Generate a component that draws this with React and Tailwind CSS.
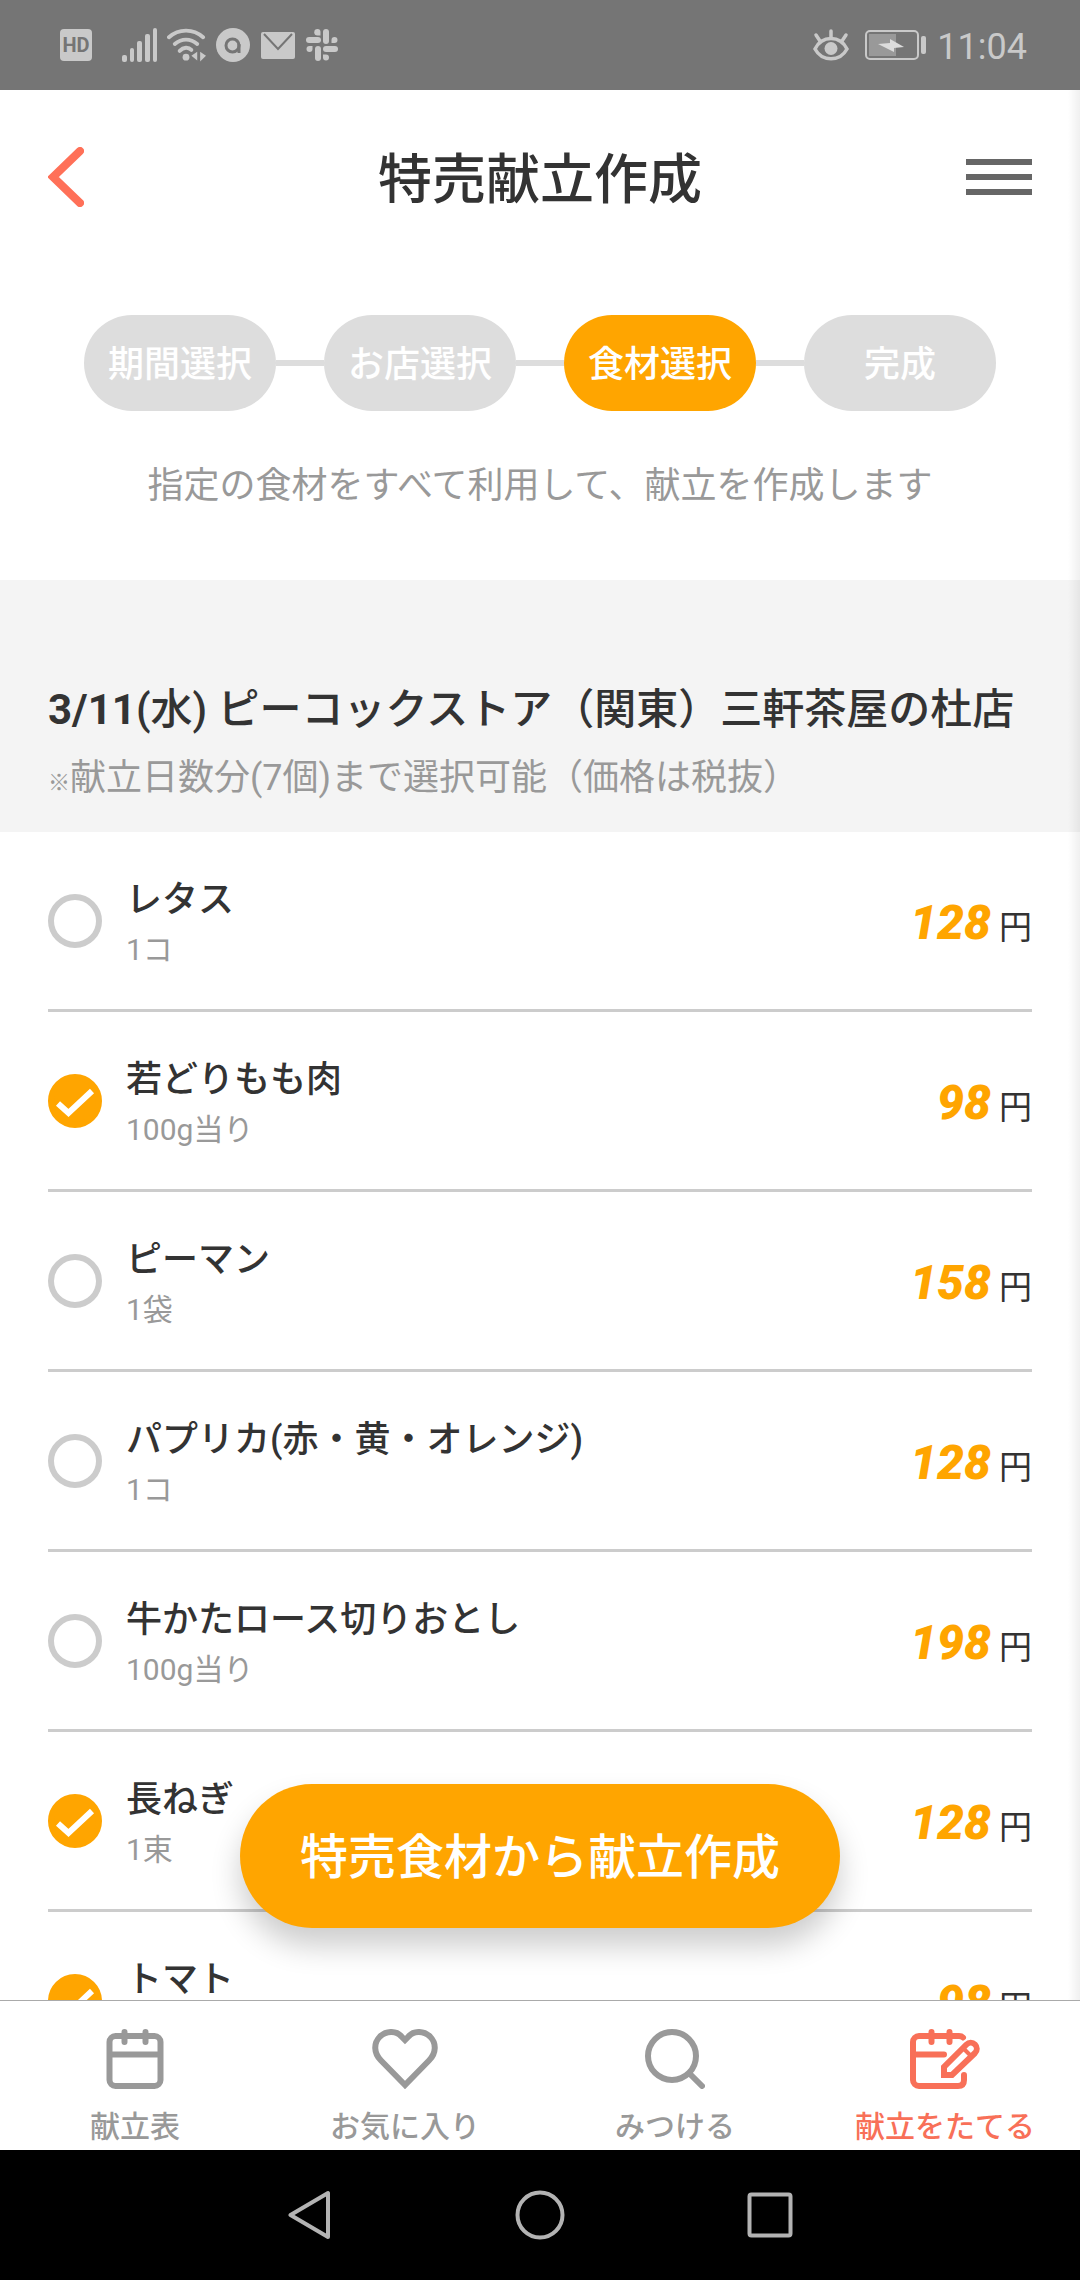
import React, { useState } from 'react';

const STEPS = ['期間選択', 'お店選択', '食材選択', '完成'];
const ACTIVE_STEP = 2;

const ITEMS = [
  { id: 1, name: 'レタス', unit: '1コ', price: 128 },
  { id: 2, name: '若どりもも肉', unit: '100g当り', price: 98 },
  { id: 3, name: 'ピーマン', unit: '1袋', price: 158 },
  { id: 4, name: 'パプリカ(赤・黄・オレンジ)', unit: '1コ', price: 128 },
  { id: 5, name: '牛かたロース切りおとし', unit: '100g当り', price: 198 },
  { id: 6, name: '長ねぎ', unit: '1束', price: 128 },
  { id: 7, name: 'トマト', unit: '1コ', price: 98 },
];

const StatusBar = () => (
  <div className="flex h-[90px] shrink-0 items-center justify-between bg-[#757575] pl-[60px] pr-[53px] text-[#c9c9c9]">
    <div className="flex items-center gap-2.5">
      <svg className="mr-5 h-8 w-8" viewBox="0 0 32 32">
        <rect width="32" height="32" rx="4" fill="currentColor" />
        <text x="16" y="23" textAnchor="middle" fontSize="20" fontWeight="700" fill="#757575">HD</text>
      </svg>
      <svg className="h-[34px] w-[35px]" viewBox="0 0 35 34" fill="currentColor">
        <rect x="0" y="27" width="5" height="7" rx="2" />
        <rect x="8" y="20" width="4" height="14" rx="2" />
        <rect x="15" y="13" width="5" height="21" rx="2" />
        <rect x="23" y="6" width="5" height="28" rx="2" />
        <rect x="31" y="0" width="4" height="34" rx="2" />
      </svg>
      <svg className="h-[34px] w-[39px]" viewBox="0 0 40 34" fill="none" stroke="currentColor" strokeWidth="4" strokeLinecap="round">
        <path d="M2 9C12 0 27 0 37 9" />
        <path d="M8 16C15 10 24 10 31 16" />
        <path d="M13 23C17 19 22 19 25 22" />
        <circle cx="19.500" cy="29.500" r="3.500" fill="currentColor" stroke="none" />
        <path d="M31 24v9l-6-5zM34 24l6 4-6 6z" fill="currentColor" stroke="none" />
      </svg>
      <svg className="h-[34px] w-[34px]" viewBox="0 0 34 34" fill="none">
        <circle cx="17" cy="17" r="17" fill="currentColor" />
        <circle cx="16.500" cy="17.500" r="6.500" stroke="#757575" strokeWidth="3" />
        <path d="M23 16v9" stroke="#757575" strokeWidth="3" />
      </svg>
      <svg className="h-[34px] w-9" viewBox="0 0 36 34" fill="none">
        <rect x="1" y="4" width="34" height="27" rx="2" fill="currentColor" />
        <path d="M4 6l14 15L32 6" stroke="#757575" strokeWidth="2" />
      </svg>
      <svg className="h-8 w-8" viewBox="0 0 32 32" fill="currentColor">
        <rect x="0" y="8" width="15" height="6" rx="3" />
        <path d="M11.500 0a3 3 0 0 1 3 3v3.500h-3a3 3 0 0 1 0-6.500z" />
        <rect x="17" y="0" width="6" height="15" rx="3" />
        <path d="M25.500 14v-3a3 3 0 1 1 3 3z" />
        <rect x="17" y="17" width="15" height="6" rx="3" />
        <path d="M17 25.500h3a3 3 0 1 1-3 3z" />
        <rect x="9" y="17" width="6" height="15" rx="3" />
        <path d="M6.500 17v3a3 3 0 1 1-3-3z" />
      </svg>
    </div>
    <div className="flex items-center">
      <svg className="h-8 w-9" viewBox="0 0 36 32" fill="none" stroke="currentColor" strokeWidth="4" strokeLinecap="round">
        <path d="M2 20C9 6 27 6 34 20C27 33 9 33 2 20z" strokeWidth="3.500" />
        <path d="M18 2v7M3 6l4 6M33 6l-4 6" strokeWidth="3.500" />
        <circle cx="18" cy="19.500" r="6.500" fill="currentColor" stroke="none" />
      </svg>
      <svg className="ml-4 h-[30px] w-[62px]" viewBox="0 0 62 30">
        <rect x="1" y="1" width="52" height="28" rx="4" fill="none" stroke="currentColor" strokeWidth="2" />
        <rect x="4" y="4" width="27" height="22" fill="#999999" />
        <path d="M13 14l12-1V9l14 8-10 1v4z" fill="#dcdcdc" />
        <rect x="56" y="6" width="5" height="18" rx="2" fill="currentColor" />
      </svg>
      <span className="ml-2.5 pt-1 text-4xl leading-[48px]">11:04</span>
    </div>
  </div>
);

const Header = () => (
  <header className="flex h-[174px] shrink-0 items-center justify-between px-12">
    <button type="button" aria-label="戻る" className="w-[66px]">
      <svg className="h-[60px] w-9" viewBox="0 0 36 60" fill="none" stroke="#ff7058" strokeWidth="8" strokeLinecap="round">
        <path d="M32 4L5 30l27 26" />
      </svg>
    </button>
    <h1 className="pt-2 text-[54px] font-medium leading-[72px] text-[#333333]">特売献立作成</h1>
    <button type="button" aria-label="メニュー" className="flex w-[66px] flex-col gap-[9px]">
      <span className="h-1.5 w-full bg-[#666666]" />
      <span className="h-1.5 w-full bg-[#666666]" />
      <span className="h-1.5 w-full bg-[#666666]" />
    </button>
  </header>
);

const StepList = () => (
  <ol className="flex items-center px-[84px] pt-[51px]">
    {STEPS.map((step, i) => (
      <React.Fragment key={step}>
        {i > 0 && <li aria-hidden="true" className="h-1.5 flex-1 bg-[#dddddd]" />}
        <li
          aria-current={i === ACTIVE_STEP ? 'step' : undefined}
          className={`flex h-24 w-48 items-center justify-center rounded-full pt-1 text-4xl font-medium text-white ${
            i === ACTIVE_STEP ? 'bg-[#ffa500]' : 'bg-[#dddddd]'
          }`}
        >
          {step}
        </li>
      </React.Fragment>
    ))}
  </ol>
);

const ItemRow = ({ item, checked, onToggle }) => (
  <li className="border-b-3 border-[#cccccc]">
    <label className="flex items-center pb-[35px] pt-[38px]">
      <span className="grid shrink-0 pb-0.5">
        <input
          type="checkbox"
          checked={checked}
          onChange={() => onToggle(item.id)}
          className="h-[54px] w-[54px] appearance-none rounded-full border-6 border-[#cccccc] [grid-area:1/1] checked:border-[#ffa500] checked:bg-[#ffa500]"
        />
        {checked && (
          <svg className="pointer-events-none h-[54px] w-[54px] [grid-area:1/1]" viewBox="0 0 54 54" fill="none" stroke="#ffffff" strokeWidth="6">
            <path d="M10 29.500L20.500 39L44 17" />
          </svg>
        )}
      </span>
      <span className="ml-6 flex flex-1 flex-col pt-1">
        <span className="text-4xl font-medium leading-[52px] text-[#333333]">{item.name}</span>
        <span className="text-[30px] leading-[48px] text-[#999999]">{item.unit}</span>
      </span>
      <span className="flex items-baseline gap-2 pt-1.5 text-[#333333]">
        <span className="text-5xl font-black italic text-[#ffa500]">{item.price}</span>
        <span className="text-[33px] leading-[48px]">円</span>
      </span>
    </label>
  </li>
);

const CalendarIcon = () => (
  <svg className="h-[60px] w-[58px]" viewBox="0 0 58 60" fill="none" stroke="currentColor" strokeWidth="6" strokeLinecap="round">
    <rect x="3.500" y="7" width="51" height="50" rx="6" />
    <path d="M4 25.500h50" strokeLinecap="butt" />
    <path d="M18.500 3v10M39.500 3v10" />
  </svg>
);

const HeartIcon = () => (
  <svg className="h-[60px] w-[66px]" viewBox="0 0 66 60" fill="none" stroke="currentColor" strokeWidth="6">
    <path d="M33 56L9 31.500C1.500 24 1.500 14 8 7.500C15 1 25 2 29.500 7.500L33 11L36.500 7.500C41 2 51 1 58 7.500C64.500 14 64.500 24 57 31.500z" />
  </svg>
);

const SearchIcon = () => (
  <svg className="h-[60px] w-[60px]" viewBox="0 0 60 60" fill="none" stroke="currentColor" strokeWidth="6" strokeLinecap="round">
    <circle cx="27" cy="27" r="24" />
    <path d="M44.500 44.500L57 57" />
  </svg>
);

const PlanIcon = () => (
  <svg className="h-[60px] w-[70px]" viewBox="0 0 70 60" fill="none" stroke="currentColor" strokeWidth="6" strokeLinecap="round">
    <path d="M53 8.500C52 7.500 51 7 49 7H9a6 6 0 0 0-6 6v38a6 6 0 0 0 6 6h39c4 0 6-2 6-6v-5" />
    <path d="M4 25.500h30M21.500 3v10M39.500 3v10" />
    <path d="M34 46v-8L56.500 15.500A6 6 0 0 1 65 24L42 46z" />
    <path d="M53 19l8 8" strokeWidth="4" />
  </svg>
);

const TABS = [
  { label: '献立表', Icon: CalendarIcon },
  { label: 'お気に入り', Icon: HeartIcon },
  { label: 'みつける', Icon: SearchIcon },
  { label: '献立をたてる', Icon: PlanIcon, active: true },
];

const TabBar = () => (
  <nav className="grid h-[150px] shrink-0 grid-cols-4 border-t border-[#aaaaaa] bg-white">
    {TABS.map(({ label, Icon, active }) => (
      <a
        key={label}
        href="#"
        className={`flex flex-col items-center pt-7 text-[30px] font-medium leading-[44px] ${
          active ? 'text-[#f87058]' : 'text-[#999999]'
        }`}
      >
        <Icon />
        <span className="mt-4">{label}</span>
      </a>
    ))}
  </nav>
);

const SystemBar = () => (
  <div className="h-[130px] shrink-0 bg-black">
    <div className="mx-auto grid h-full w-[64%] grid-cols-3 items-center justify-items-center">
      <button type="button" aria-label="Back">
        <svg className="h-[50px] w-[44px]" viewBox="0 0 44 50" fill="none" stroke="#b3b3b3" strokeWidth="4" strokeLinejoin="round">
          <path d="M2.500 25L40 3v44z" />
        </svg>
      </button>
      <button type="button" aria-label="Home">
        <svg className="h-[50px] w-[50px]" viewBox="0 0 50 50" fill="none" stroke="#b3b3b3" strokeWidth="4">
          <circle cx="25" cy="25" r="22.500" />
        </svg>
      </button>
      <button type="button" aria-label="Recents">
        <svg className="h-[46px] w-[46px]" viewBox="0 0 46 46" fill="none" stroke="#b3b3b3" strokeWidth="4">
          <rect x="2.500" y="2.500" width="41" height="41" rx="2" />
        </svg>
      </button>
    </div>
  </div>
);

export default function App() {
  const [selected, setSelected] = useState([2, 6, 7]);

  const toggle = (id) => {
    setSelected((prev) => (prev.includes(id) ? prev.filter((v) => v !== id) : [...prev, id]));
  };

  return (
    <div lang="ja" className="flex h-screen flex-col bg-white font-[Roboto,'Noto_Sans_CJK_JP',sans-serif]">
      <StatusBar />
      <div className="relative flex min-h-0 flex-1 flex-col">
        <Header />
        <main className="min-h-0 flex-1 overflow-hidden">
          <StepList />
          <p className="pb-[67px] pt-12 text-center text-4xl leading-[54px] text-[#999999]">
            指定の食材をすべて利用して、献立を作成します
          </p>
          <section>
            <div className="bg-[#f4f4f4] px-12 pb-[26px] pt-[98px]">
              <h2 className="text-[42px] font-medium leading-[64px] text-[#333333]">
                <span className="font-bold">3/11</span>(水) ピーコックストア（関東）三軒茶屋の杜店
              </h2>
              <p className="mt-2 text-4xl leading-[56px] text-[#999999]">
                <span className="text-[22px] font-medium leading-none">※</span>献立日数分(7個)まで選択可能（価格は税抜）
              </p>
            </div>
            <ul className="px-12">
              {ITEMS.map((item) => (
                <ItemRow key={item.id} item={item} checked={selected.includes(item.id)} onToggle={toggle} />
              ))}
            </ul>
          </section>
        </main>

        {/* Floating action */}
        <div className="pointer-events-none absolute inset-x-0 bottom-[72px] flex justify-center">
          <button
            type="button"
            className="pointer-events-auto h-36 rounded-full bg-[#ffa500] px-[60px] pt-1 text-5xl font-medium text-white shadow-[0_18px_30px_rgba(0,0,0,0.2)]"
          >
            特売食材から献立作成
          </button>
        </div>

        {/* Edge shade of the closed side menu */}
        <div className="pointer-events-none absolute inset-y-0 right-0 w-3 bg-linear-to-l from-black/6 to-transparent" />
      </div>
      <TabBar />
      <SystemBar />
    </div>
  );
}
